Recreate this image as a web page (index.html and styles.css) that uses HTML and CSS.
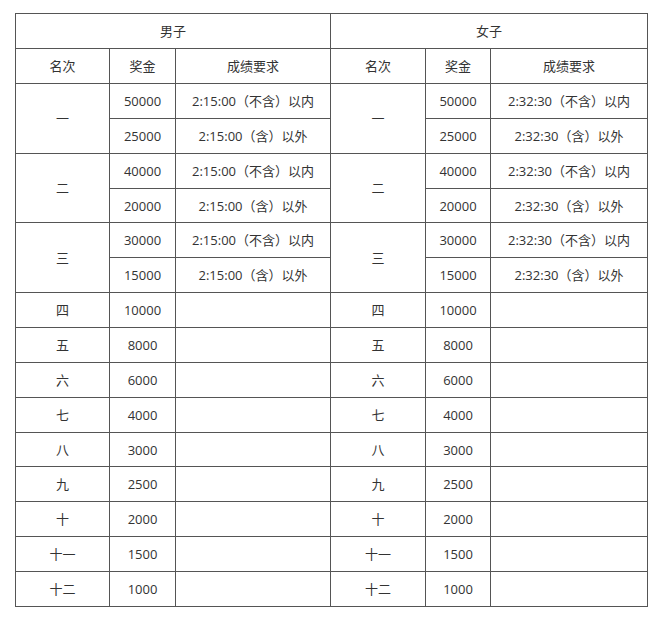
FILE: index.html
```html
<!DOCTYPE html>
<html lang="zh-CN">
<head>
<meta charset="utf-8">
<title>奖金表</title>
<link rel="stylesheet" href="styles.css">
</head>
<body>
<table class="prize">
  <colgroup>
    <col class="c-rank"><col class="c-money"><col class="c-req">
    <col class="c-rank2"><col class="c-money2"><col class="c-req2">
  </colgroup>
  <tr class="r-head"><td colspan="3">男子</td><td colspan="3">女子</td></tr>
  <tr class="r-head"><td>名次</td><td>奖金</td><td>成绩要求</td><td>名次</td><td>奖金</td><td>成绩要求</td></tr>
  <tr><td rowspan="2">一</td><td>50000</td><td>2:15:00（不含）以内</td><td rowspan="2">一</td><td>50000</td><td>2:32:30（不含）以内</td></tr>
  <tr><td>25000</td><td>2:15:00（含）以外</td><td>25000</td><td>2:32:30（含）以外</td></tr>
  <tr><td rowspan="2">二</td><td>40000</td><td>2:15:00（不含）以内</td><td rowspan="2">二</td><td>40000</td><td>2:32:30（不含）以内</td></tr>
  <tr><td>20000</td><td>2:15:00（含）以外</td><td>20000</td><td>2:32:30（含）以外</td></tr>
  <tr><td rowspan="2">三</td><td>30000</td><td>2:15:00（不含）以内</td><td rowspan="2">三</td><td>30000</td><td>2:32:30（不含）以内</td></tr>
  <tr><td>15000</td><td>2:15:00（含）以外</td><td>15000</td><td>2:32:30（含）以外</td></tr>
  <tr><td>四</td><td>10000</td><td></td><td>四</td><td>10000</td><td></td></tr>
  <tr><td>五</td><td>8000</td><td></td><td>五</td><td>8000</td><td></td></tr>
  <tr><td>六</td><td>6000</td><td></td><td>六</td><td>6000</td><td></td></tr>
  <tr><td>七</td><td>4000</td><td></td><td>七</td><td>4000</td><td></td></tr>
  <tr><td>八</td><td>3000</td><td></td><td>八</td><td>3000</td><td></td></tr>
  <tr><td>九</td><td>2500</td><td></td><td>九</td><td>2500</td><td></td></tr>
  <tr><td>十</td><td>2000</td><td></td><td>十</td><td>2000</td><td></td></tr>
  <tr><td>十一</td><td>1500</td><td></td><td>十一</td><td>1500</td><td></td></tr>
  <tr><td>十二</td><td>1000</td><td></td><td>十二</td><td>1000</td><td></td></tr>
</table>
</body>
</html>
```

FILE: styles.css
```css
html, body {
  margin: 0;
  padding: 0;
  background: #ffffff;
}

body {
  font-family: "Open Sans", "Noto Sans CJK SC", sans-serif;
  font-size: 13px;
  color: #333333;
}

.prize {
  margin: 13px 0 0 15px;
  border-collapse: collapse;
  table-layout: fixed;
  width: 632px;
}

.c-rank { width: 94px; }
.c-money { width: 66px; }
.c-req { width: 155px; }
.c-rank2 { width: 95px; }
.c-money2 { width: 65px; }
.c-req2 { width: 157px; }

.prize td {
  border: 1px solid #555555;
  text-align: center;
  vertical-align: middle;
  padding: 0;
  height: 33.87px;
  line-height: 20px;
}

.prize tr.r-head td {
  height: 34px;
}
```
